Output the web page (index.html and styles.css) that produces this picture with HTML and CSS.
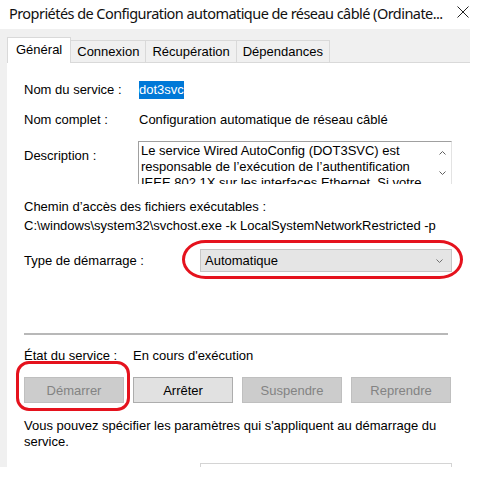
FILE: index.html
```html
<!DOCTYPE html>
<html lang="fr">
<head>
  <meta charset="UTF-8" />
  <title>Propriétés du service</title>
  <link rel="stylesheet" href="styles.css">
</head>
<body>
  <div class="window">
    <div class="titlebar">
      <span class="title">Propriétés de Configuration automatique de réseau câblé (Ordinate...</span>
      <span class="close">
        <svg width="12" height="12" viewBox="0 0 12 12"><path d="M0.5 0.5 L11.5 11.5 M11.5 0.5 L0.5 11.5" stroke="#222" stroke-width="1" fill="none"/></svg>
      </span>
    </div>

    <div class="dialog">
      <div class="tabs">
        <div class="tab active">Général</div>
        <div class="tab">Connexion</div>
        <div class="tab">Récupération</div>
        <div class="tab">Dépendances</div>
      </div>

      <div class="panel">
        <div class="row info">
          <span class="label">Nom du service :</span>
          <span class="value"><span class="selected">dot3svc</span></span>
        </div>

        <div class="row info gap">
          <span class="label">Nom complet :</span>
          <span class="value">Configuration automatique de réseau câblé</span>
        </div>

        <div class="row gap">
          <span class="label desc-label">Description :</span>
          <div class="desc-box">
            <div class="desc-text">
              <span>Le service Wired AutoConfig (DOT3SVC) est</span>
              <span>responsable de l’exécution de l’authentification</span>
              <span>IEEE 802.1X sur les interfaces Ethernet. Si votre</span>
            </div>
            <div class="scrollbar">
              <svg width="7" height="4" viewBox="0 0 7 4"><path d="M0.5 3.5 L3.5 0.5 L6.5 3.5" stroke="#606060" fill="none"/></svg>
              <svg width="7" height="4" viewBox="0 0 7 4"><path d="M0.5 0.5 L3.5 3.5 L6.5 0.5" stroke="#606060" fill="none"/></svg>
            </div>
          </div>
        </div>

        <div class="path">
          <div>Chemin d’accès des fichiers exécutables :</div>
          <div>C:\windows\system32\svchost.exe -k LocalSystemNetworkRestricted -p</div>
        </div>

        <div class="row startup">
          <span class="label wide">Type de démarrage :</span>
          <div class="select">
            <span>Automatique</span>
            <svg width="7" height="4" viewBox="0 0 7 4"><path d="M0.5 0.5 L3.5 3.5 L6.5 0.5" stroke="#707070" fill="none"/></svg>
            <div class="ring ring-select"></div>
          </div>
        </div>

        <div class="separator"></div>

        <div class="row status">
          <span class="label short">État du service :</span>
          <span class="value">En cours d'exécution</span>
        </div>

        <div class="buttons">
          <div class="btn-wrap">
            <button class="btn" disabled>Démarrer</button>
            <div class="ring ring-btn"></div>
          </div>
          <button class="btn active-btn">Arrêter</button>
          <button class="btn" disabled>Suspendre</button>
          <button class="btn" disabled>Reprendre</button>
        </div>

        <p class="hint">Vous pouvez spécifier les paramètres qui s'appliquent au démarrage du service.</p>

        <div class="params"></div>
      </div>
    </div>
  </div>
</body>
</html>
```

FILE: styles.css
```css
body {
  margin: 0;
  background: #fff;
  font-family: "Liberation Sans", Arial, sans-serif;
  font-size: 13px;
  color: #000;
}
.window {
  width: 482px;
  height: 480px;
  overflow: hidden;
}
.titlebar {
  height: 29px;
  display: flex;
  align-items: center;
  justify-content: space-between;
  padding: 0 13px 0 9px;
}
.title {
  font-family: "Noto Sans", sans-serif;
  font-size: 14.5px;
  letter-spacing: -0.55px;
  white-space: nowrap;
  color: #111;
  margin-top: -4px;
}
.close {
  display: flex;
  flex: none;
  margin-top: -5px;
}
.dialog {
  width: 470px;
  height: 438px;
  box-sizing: border-box;
  background: #f0f0f0;
  padding: 8px 0 0 7px;
  overflow: hidden;
}
.tabs {
  display: flex;
  align-items: flex-end;
  height: 26px;
  box-sizing: border-box;
  border-bottom: 1px solid #d9d9d9;
}
.tab {
  height: 22px;
  box-sizing: border-box;
  line-height: 21px;
  padding: 0 6px;
  border: 1px solid #d9d9d9;
  border-left: none;
  border-bottom: none;
  background: #f0f0f0;
}
.tab.active {
  height: 26px;
  line-height: 23px;
  padding: 0 8px 0 8px;
  margin-bottom: -1px;
  border-left: 1px solid #d9d9d9;
  background: #fff;
}
.panel {
  background: #fff;
  height: 404px;
  padding: 18px 0 0 17px;
  box-sizing: border-box;
}
.row {
  display: flex;
}
.info {
  line-height: 18px;
}
.gap {
  margin-top: 12px;
}
.label {
  width: 115px;
  flex: none;
}
.selected {
  background: #0078d7;
  color: #fff;
  display: inline-block;
}
.desc-label {
  padding-top: 7px;
  line-height: 16px;
}
.desc-box {
  display: flex;
  width: 314px;
  height: 43px;
  margin-left: -1px;
  box-sizing: border-box;
  border-top: 1px solid #a0a0a0;
  border-left: 1px solid #a0a0a0;
  border-right: 1px solid #e3e3e3;
  overflow: hidden;
}
.desc-text {
  flex: 1;
  padding: 1px 0 0 2px;
  line-height: 16px;
  white-space: nowrap;
}
.desc-text span {
  display: block;
}
.scrollbar {
  width: 17px;
  display: flex;
  flex-direction: column;
  align-items: center;
  padding-top: 9px;
  gap: 16px;
  box-sizing: border-box;
}
.path {
  margin-top: 13px;
  line-height: 19px;
}
.startup {
  margin-top: 14px;
  line-height: 23px;
}
.label.wide {
  width: 176px;
}
.select {
  position: relative;
  width: 252px;
  height: 23px;
  box-sizing: border-box;
  border: 1px solid #c6c6c6;
  background: #e5e5e5;
  display: flex;
  align-items: center;
  justify-content: space-between;
  padding: 0 8px 0 4px;
  line-height: 21px;
}
.ring {
  position: absolute;
  border: 3px solid #e5121d;
  pointer-events: none;
}
.ring-select {
  left: -19px;
  right: -12px;
  top: -10px;
  bottom: -8px;
  border-radius: 24px / 20px;
}
.separator {
  width: 424px;
  height: 2px;
  background: #b8b8b8;
  margin-top: 61px;
}
.status {
  margin-top: 13px;
  line-height: 16px;
}
.label.short {
  width: 109px;
}
.buttons {
  display: flex;
  gap: 9px;
  margin-top: 13px;
}
.btn-wrap {
  position: relative;
  display: flex;
}
.btn {
  width: 100px;
  height: 26px;
  box-sizing: border-box;
  border: 1px solid #bfbfbf;
  background: #cccccc;
  color: #838383;
  font-family: inherit;
  font-size: 13px;
  padding: 0;
}
.btn.active-btn {
  border-color: #adadad;
  background: #e1e1e1;
  color: #000;
}
.ring-btn {
  left: -8px;
  right: -6px;
  top: -16px;
  bottom: -8px;
  border-radius: 13px;
}
.hint {
  margin: 15px 0 0 0;
  width: 430px;
  line-height: 16px;
}
.params {
  margin: 13px 0 0 176px;
  width: 252px;
  height: 20px;
  box-sizing: border-box;
  border: 1px solid #d4d4d4;
}
```
